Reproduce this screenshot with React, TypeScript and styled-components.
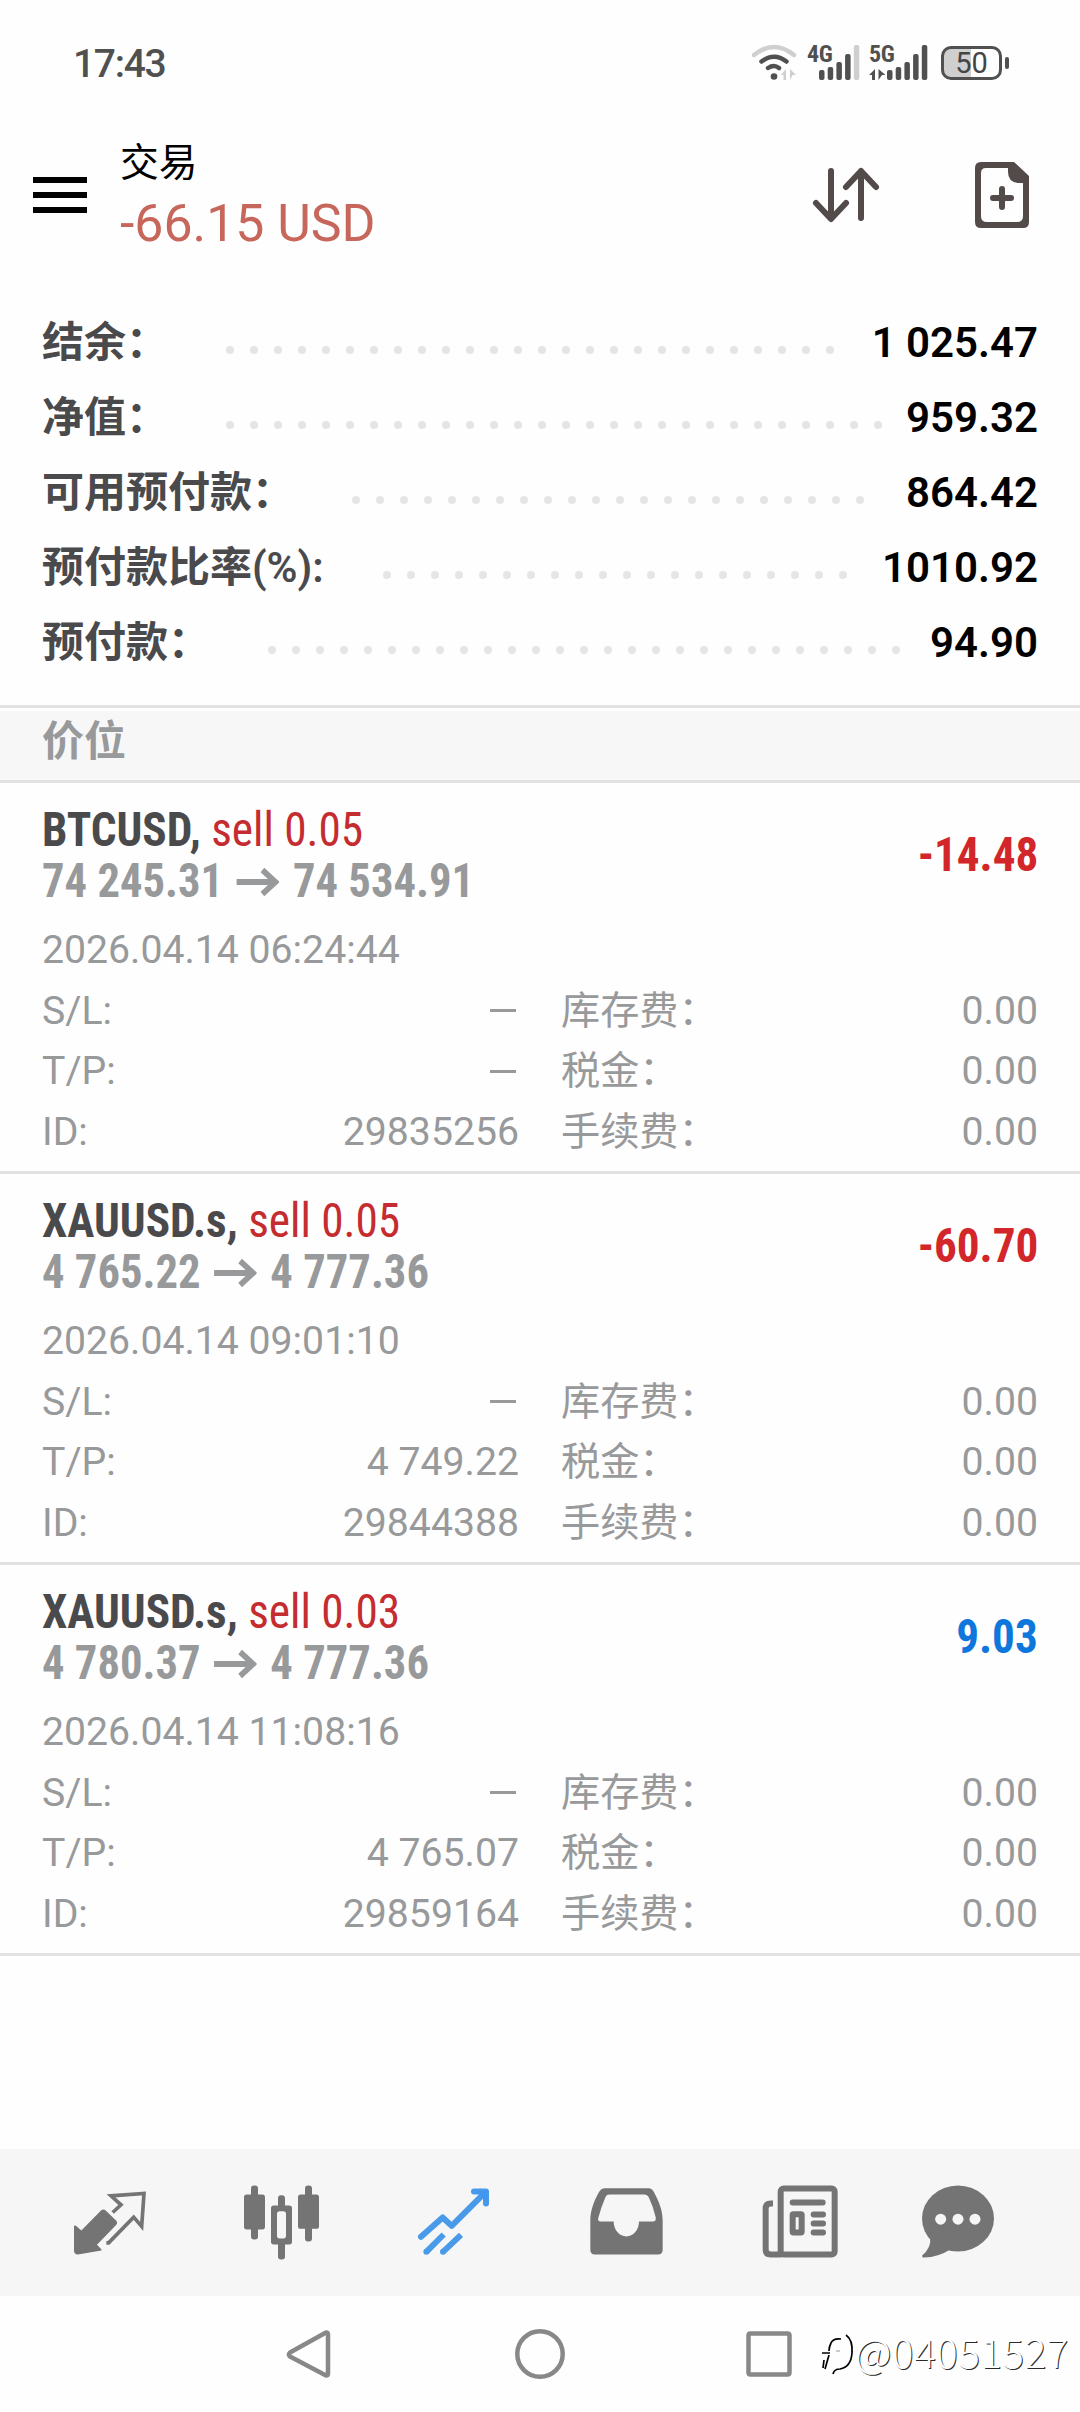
import React from "react";
import styled, { createGlobalStyle } from "styled-components";

const sans = `Roboto, "Noto Sans CJK SC", sans-serif`;
const condensed = `"Roboto Condensed", "Noto Sans CJK SC", sans-serif`;
const ink = "#4a4a4d";
const muted = "#98999b";
const iconGrey = "#747474";
const rule = "#e2e2e2";

const GlobalStyle = createGlobalStyle`
  body {
    margin: 0;
    background: #fefefe;
    font-family: ${sans};
  }
`;

const Screen = styled.div`
  position: relative;
  display: flex;
  flex-direction: column;
  width: 1080px;
  height: 2412px;
  overflow: hidden;
  background: #fefefe;
`;

const StatusBar = styled.div`
  display: flex;
  justify-content: space-between;
  box-sizing: border-box;
  height: 90px;
  padding: 39px 71px 0 73px;
`;

const Clock = styled.div`
  font-size: 39px;
  font-weight: 500;
  line-height: 51px;
  letter-spacing: -1.3px;
  color: #505050;
`;

const StatusIcons = styled.div`
  display: flex;
  gap: 10px;
  align-items: flex-start;
  padding-top: 5px;
`;

const SignalGroup = styled.div<{ $width: number }>`
  display: grid;
  width: ${(p) => p.$width}px;
  height: 37px;
  > * {
    grid-area: 1 / 1;
  }
`;

const NetworkLabel = styled.span`
  font: 700 24px/20px ${condensed};
  letter-spacing: -0.4px;
  color: #505050;
`;

const BatteryBody = styled.div`
  display: flex;
  align-items: center;
  justify-content: center;
  box-sizing: border-box;
  width: 61px;
  height: 34px;
  margin-top: 2px;
  border: 3px solid #505050;
  border-radius: 10px;
  background: linear-gradient(90deg, #cfcfcf 50%, #fefefe 50%);
  font-size: 29px;
  line-height: 28px;
  color: #444;
`;

const Battery = styled.div`
  display: flex;
  gap: 3px;
  align-items: flex-start;
  margin-left: 3px;
`;

const BatteryCap = styled.div`
  width: 4px;
  height: 12px;
  margin-top: 13px;
  border-radius: 2px;
  background: #505050;
`;

const Header = styled.header`
  display: flex;
  align-items: center;
  height: 120px;
  padding: 46px 51px 49px 33px;
`;

const HeaderTitle = styled.div`
  flex: 1;
  margin-left: 33px;
`;

const ScreenName = styled.div`
  font-size: 38.8px;
  line-height: 53px;
  color: #000;
`;

const FloatingTotal = styled.div`
  padding-top: 2px;
  font-size: 51.8px;
  line-height: 65px;
  color: #c7665b;
`;

const HeaderActions = styled.div`
  display: flex;
  gap: 93px;
`;

const Summary = styled.section`
  padding: 0 42px 25px 42px;
`;

const SummaryRow = styled.div`
  display: flex;
  align-items: center;
  height: 75px;
  font-size: 42px;
  line-height: 75px;
`;

const SummaryLabel = styled.div`
  font-weight: 700;
  color: ${ink};
`;

const SummaryParens = styled.span`
  font-weight: 600;
`;

const SummaryValue = styled.div`
  font-weight: 600;
  color: #000;
`;

const Leader = styled.div<{ $start: number }>`
  display: flex;
  flex: 1;
  gap: 16px;
  padding: 15px 0 0 ${(p) => p.$start}px;
`;

const Dot = styled.i`
  width: 8px;
  height: 8px;
  border-radius: 50%;
  background: #e5e5e5;
`;

const SectionHead = styled.div`
  height: 64px;
  padding: 0 42px 8px;
  border-top: 3px solid ${rule};
  border-bottom: 3px solid ${rule};
  background: linear-gradient(#fefefe 3px, #f7f7f7 3px);
  font-size: 42px;
  font-weight: 700;
  line-height: 67px;
  color: ${muted};
`;

const PositionCard = styled.article`
  box-sizing: border-box;
  height: 391px;
  padding: 21px 42px 0 42px;
  border-bottom: 3px solid ${rule};
`;

const PositionHead = styled.div`
  display: flex;
  align-items: center;
  justify-content: space-between;
  height: 102px;
  font: 48px/51px ${condensed};
`;

const Squeezed = styled.div<{ $ratio: number; $origin: string }>`
  white-space: pre;
  transform: scaleX(${(p) => p.$ratio});
  transform-origin: ${(p) => p.$origin};
`;

const SymbolName = styled.span`
  font-weight: 700;
  color: ${ink};
`;

const Side = styled.span`
  color: #c42c30;
`;

const PriceLine = styled.div`
  display: flex;
  font-weight: 700;
  color: ${muted};
`;

const ArrowGlyph = styled.svg`
  width: 46px;
  height: 28px;
  margin: 13px 15px 0 14px;
`;

const Profit = styled.div<{ $gain: boolean }>`
  padding-bottom: 2px;
  font-weight: 700;
  color: ${(p) => (p.$gain ? "#0f77dc" : "#d2262a")};
`;

const Details = styled.div`
  display: grid;
  grid-template-columns: 477px 1fr;
  column-gap: 42px;
  grid-auto-rows: 60.7px;
  margin-top: 14px;
  font-size: 39.2px;
  font-weight: 400;
  line-height: 60.7px;
  color: ${muted};
`;

const OpenTime = styled.div`
  grid-column: 1 / -1;
`;

const Field = styled.div`
  display: flex;
  justify-content: space-between;
  align-items: center;
`;

const EmptyValue = styled.i`
  width: 26px;
  height: 3px;
  margin: 0 3px 1px 0;
  background: ${muted};
`;

const Filler = styled.div`
  flex: 1;
`;

const TabBar = styled.nav`
  display: flex;
  align-items: center;
  height: 147px;
  padding-left: 24px;
  background: #f6f6f6;
`;

const Tab = styled.div<{ $width?: number }>`
  display: flex;
  justify-content: center;
  width: ${(p) => p.$width ?? 172}px;
`;

const SystemNav = styled.div`
  display: flex;
  gap: 170px;
  align-items: center;
  justify-content: center;
  height: 116px;
`;

const Watermark = styled.div`
  position: absolute;
  left: 819px;
  top: 2322px;
  display: flex;
  align-items: center;
  font: 300 40px/58px "Noto Sans CJK SC", sans-serif;
  letter-spacing: 0.7px;
  color: #fff;
  text-shadow: 1px 1px 0 #2a2a2a;
`;

const MenuIcon = () => (
  <svg width="54" height="38" viewBox="0 0 54 38">
    <path d="M0 3h54M0 18h54M0 33h54" stroke="#000" strokeWidth="6" />
  </svg>
);

const SortIcon = () => (
  <svg width="72" height="68" viewBox="810 162 72 68" fill="none" stroke="#534b49" strokeWidth="6" strokeLinecap="round" strokeLinejoin="round">
    <path d="M831 171V218M816 203l15 16 15-16M861 218V171M846 187l15-16 15 16" />
  </svg>
);

const NewOrderIcon = () => (
  <svg width="54" height="68" viewBox="975 162 54 68" fill="#534b49">
    <path
      fillRule="evenodd"
      d="M981 162h33l15 14v46q0 6-6 6h-42q-6 0-6-6v-54q0-6 6-6zM986 168q-5 0-5 5v43q0 6 6 6h30q6 0 6-6v-33h-5q-10-1-10-11v-4z"
    />
    <path d="M993 198h18M1002 189v18" stroke="#534b49" strokeWidth="6" strokeLinecap="round" />
  </svg>
);

const WifiIcon = () => (
  <svg width="45" height="37" viewBox="752 44 45 37" fill="none" strokeWidth="4.5">
    <path d="M754 55q20-16 40 0" stroke="#cfcfcf" strokeLinecap="round" />
    <path d="M761.500 61.500q12.500-9.500 25 0M768 68q6-4 11 0" stroke="#505050" strokeLinecap="round" />
    <circle cx="774" cy="76.500" r="3.300" fill="#505050" />
    <path d="M781 75l5-6v11h-2.500v-5zM790 69l6 6h-3.500l-2.500 5z" fill="#cfcfcf" />
  </svg>
);

const SignalBars = ({ left, faded, arrows }: { left: number; faded?: boolean; arrows?: boolean }) => (
  <svg width={left + 46} height="37" viewBox={`0 0 ${left + 46} 37`} fill="#505050">
    {[10, 13, 18, 26, 35].map((h, i) => (
      <rect key={h} x={left + i * 8.7} y={36 - h} width="5.500" height={h} rx="2" fill={faded && i === 4 ? "#cfcfcf" : undefined} />
    ))}
    {arrows && <path d="M0 31l6-6v11h-3v-5zM9.500 25l7 6h-3.500l-3.500 5z" />}
  </svg>
);

const PriceArrow = () => (
  <ArrowGlyph viewBox="0 0 46 28" fill="none" stroke={muted} strokeWidth="6">
    <path d="M0 14H43M28 2l14 12-14 12" />
  </ArrowGlyph>
);

const TabIcon = ({ cx, children }: { cx: number; children: React.ReactNode }) => (
  <svg width="90" height="90" viewBox={`${cx - 135} 112.5 270 270`} fill={iconGrey}>
    {children}
  </svg>
);

const QuotesIcon = () => (
  <TabIcon cx={330}>
    <path d="M303 210q7-6 14 0l32 31q5 6 0 12l-58 60 13 13v4l-70 12q-12 0-12-12v-74l5-1 17 15z" />
    <path d="M338 216l25-23-30-27 99-7-7 99-24-28-75 77h-7" fill="none" stroke={iconGrey} strokeWidth="11" />
  </TabIcon>
);

const CandlesIcon = () => (
  <TabIcon cx={846}>
    <rect x="753" y="135" width="21" height="162" rx="9" />
    <rect x="732" y="162" width="63" height="105" rx="8" />
    <rect x="834" y="164" width="21" height="193" rx="9" />
    <rect x="813" y="195" width="63" height="117" rx="8" />
    <rect x="831" y="212" width="27" height="82" rx="8" fill="#f6f6f6" />
    <rect x="915" y="135" width="21" height="168" rx="9" />
    <rect x="894" y="162" width="63" height="103" rx="8" />
  </TabIcon>
);

const TradeIcon = () => (
  <TabIcon cx={282}>
    <g fill="none" stroke="#4a9aea" strokeWidth="18" strokeLinecap="round" strokeLinejoin="round">
      <path d="M183 289l65-58 27 25L374 157M342 153h36v36" />
      <path d="M199 334l52-52M249 334l54-51" strokeLinecap="butt" />
      <path d="M199 334h.1M249 334h.1" />
    </g>
    <path d="M348 150h34v36z" fill="#3f97f0" />
  </TabIcon>
);

const InboxIcon = () => (
  <TabIcon cx={798}>
    <path
      fillRule="evenodd"
      d="M735 143H866Q876 143 882 155C898 185 908 210 908 240V328Q908 342 894 342H705Q691 342 691 328V240C691 210 702 180 718 153Q724 143 735 143ZM748 162Q740 162 737 169Q724 198 715 232Q712 243 722 243H761A38 45 0 0 0 837 243H879Q889 243 887 230Q880 200 867 172Q862 162 852 162Z"
    />
  </TabIcon>
);

const NewsIcon = () => (
  <TabIcon cx={234}>
    <g fill="none" stroke={iconGrey} strokeWidth="18">
      <rect x="182" y="144" width="162" height="198" rx="9" />
      <path d="M159 189h-7q-15 0-15 15v123q0 15 15 15h33" />
      <path d="M218 186h90M281 222h28M281 249h28M281 276h28" strokeLinecap="round" />
      <rect x="218" y="221" width="27" height="55" rx="2" />
    </g>
  </TabIcon>
);

const ChatIcon = () => (
  <TabIcon cx={714}>
    <ellipse cx="714" cy="234" rx="108" ry="99" />
    <path d="M631 290q2 34-24 54-2 7 6 7 41 0 82-26z" />
    <g fill="#f6f6f6">
      <circle cx="662" cy="236" r="16.500" />
      <circle cx="714" cy="236" r="16.500" />
      <circle cx="765" cy="236" r="16.500" />
    </g>
  </TabIcon>
);

const NavGlyph = ({ x, d }: { x: number; d: string }) => (
  <svg width="60" height="60" viewBox={`${x} 2324 60 60`} fill="none" stroke="#888" strokeWidth="4.500" strokeLinejoin="round">
    <path d={d} />
  </svg>
);

const WatermarkLogo = () => (
  <svg width="36" height="50" viewBox="819 2328 36 50" fill="none" stroke="#000" strokeWidth="1.700">
    <path d="M841 2341q-8-1-10 4-2 4-2 8M822 2355h8M824 2362l-1 8M829 2357l-4 14" />
    <path d="M846 2337q7 5 6 18-1 14-12 16-6 0-7 5" />
    <path d="M836 2353h4" strokeWidth="1" stroke="#999" />
  </svg>
);

const summary = [
  { label: "结余：", value: "1 025.47", dots: 26, start: 58 },
  { label: "净值：", value: "959.32", dots: 28, start: 58 },
  { label: "可用预付款：", value: "864.42", dots: 22, start: 58 },
  { label: "预付款比率", suffix: "(%):", value: "1010.92", dots: 20, start: 59 },
  { label: "预付款：", value: "94.90", dots: 27, start: 58 },
];

const positions = [
  { symbol: "BTCUSD,", side: "sell 0.05", from: "74 245.31", to: "74 534.91", profit: "-14.48", time: "2026.04.14 06:24:44", tp: "", id: "29835256" },
  { symbol: "XAUUSD.s,", side: "sell 0.05", from: "4 765.22", to: "4 777.36", profit: "-60.70", time: "2026.04.14 09:01:10", tp: "4 749.22", id: "29844388" },
  { symbol: "XAUUSD.s,", side: "sell 0.03", from: "4 780.37", to: "4 777.36", profit: "9.03", time: "2026.04.14 11:08:16", tp: "4 765.07", id: "29859164" },
];

const DetailField = ({ name, value }: { name: string; value: string }) => (
  <Field>
    <span>{name}</span>
    {value ? <span>{value}</span> : <EmptyValue />}
  </Field>
);

export default function App() {
  return (
    <Screen>
      <GlobalStyle />
      <StatusBar>
        <Clock>17:43</Clock>
        <StatusIcons>
          <WifiIcon />
          <SignalGroup $width={52}>
            <NetworkLabel>4G</NetworkLabel>
            <SignalBars left={12} faded />
          </SignalGroup>
          <SignalGroup $width={59}>
            <NetworkLabel>5G</NetworkLabel>
            <SignalBars left={18} arrows />
          </SignalGroup>
          <Battery>
            <BatteryBody>50</BatteryBody>
            <BatteryCap />
          </Battery>
        </StatusIcons>
      </StatusBar>

      <Header>
        <MenuIcon />
        <HeaderTitle>
          <ScreenName>交易</ScreenName>
          <FloatingTotal>-66.15 USD</FloatingTotal>
        </HeaderTitle>
        <HeaderActions>
          <SortIcon />
          <NewOrderIcon />
        </HeaderActions>
      </Header>

      <Summary>
        {summary.map((row) => (
          <SummaryRow key={row.label}>
            <SummaryLabel>
              {row.label}
              {row.suffix && <SummaryParens>{row.suffix}</SummaryParens>}
            </SummaryLabel>
            <Leader $start={row.start}>
              {Array.from({ length: row.dots }, (_, i) => (
                <Dot key={i} />
              ))}
            </Leader>
            <SummaryValue>{row.value}</SummaryValue>
          </SummaryRow>
        ))}
      </Summary>

      <SectionHead>价位</SectionHead>
      {positions.map((p) => (
        <PositionCard key={p.id}>
          <PositionHead>
            <div>
              <Squeezed $ratio={0.943} $origin="left">
                <SymbolName>{p.symbol}</SymbolName> <Side>{p.side}</Side>
              </Squeezed>
              <Squeezed $ratio={0.93} $origin="left">
                <PriceLine>
                  {p.from}
                  <PriceArrow />
                  {p.to}
                </PriceLine>
              </Squeezed>
            </div>
            <Squeezed $ratio={0.94} $origin="right">
              <Profit $gain={!p.profit.startsWith("-")}>{p.profit}</Profit>
            </Squeezed>
          </PositionHead>
          <Details>
            <OpenTime>{p.time}</OpenTime>
            <DetailField name="S/L:" value="" />
            <DetailField name="库存费：" value="0.00" />
            <DetailField name="T/P:" value={p.tp} />
            <DetailField name="税金：" value="0.00" />
            <DetailField name="ID:" value={p.id} />
            <DetailField name="手续费：" value="0.00" />
          </Details>
        </PositionCard>
      ))}
      <Filler />

      <TabBar>
        <Tab><QuotesIcon /></Tab>
        <Tab><CandlesIcon /></Tab>
        <Tab><TradeIcon /></Tab>
        <Tab><InboxIcon /></Tab>
        <Tab><NewsIcon /></Tab>
        <Tab $width={148}><ChatIcon /></Tab>
      </TabBar>
      <SystemNav>
        <NavGlyph x={280} d="M326 2332.500q2 0 2 2v39q0 2-2 2l-36-19q-2-2 0-4z" />
        <NavGlyph x={510} d="M517.300 2354a22.700 22.700 0 1 0 45.400 0a22.700 22.700 0 1 0-45.400 0z" />
        <NavGlyph x={740} d="M750.500 2333.500h37q2 0 2 2v37q0 2-2 2h-37q-2 0-2-2v-37q0-2 2-2z" />
      </SystemNav>
      <Watermark>
        <WatermarkLogo />
        @04051527
      </Watermark>
    </Screen>
  );
}
